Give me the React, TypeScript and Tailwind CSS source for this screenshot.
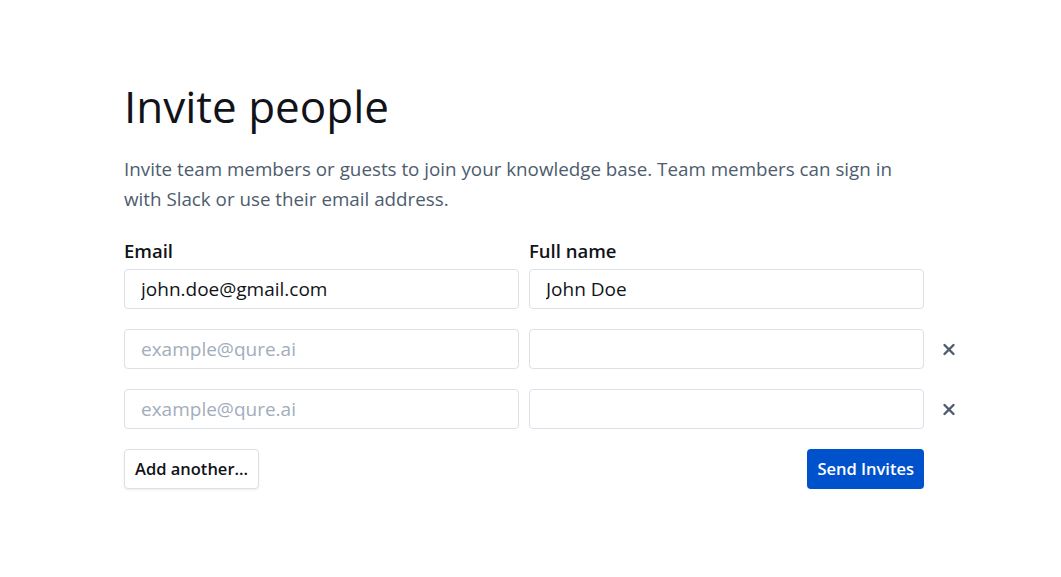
import { X } from "lucide-react";

const rows = [
  { email: "john.doe@gmail.com", name: "John Doe", removable: false },
  { email: "", name: "", removable: true },
  { email: "", name: "", removable: true },
];

export default function App() {
  return (
    <div className="min-h-screen bg-white font-['Open_Sans',sans-serif] text-[#111319]">
      <div className="pl-[124px] pt-[78px]">
        <h1 className="text-[44px] leading-[56px] font-normal">Invite people</h1>
        <p className="mt-[20px] w-[800px] text-[18.8px] leading-[30px] text-[#4e5c6e]">
          Invite team members or guests to join your knowledge base. Team members can sign in with Slack or use their email address.
        </p>

        <div className="mt-[24px] flex flex-col gap-[20px]">
          {rows.map((r, i) => (
            <div key={i} className="flex items-end">
              <div className="flex gap-[10px]">
                <div className="flex flex-col gap-[5px]">
                  {i === 0 && <label className="text-[18.5px] leading-[26px] font-semibold">Email</label>}
                  <input
                    defaultValue={r.email}
                    placeholder="example@qure.ai"
                    className="h-[40px] w-[395px] rounded-[4px] border border-[#dae1e9] px-[16px] text-[19px] text-[#111319] outline-none placeholder:text-[#a2adbb]"
                  />
                </div>
                <div className="flex flex-col gap-[5px]">
                  {i === 0 && <label className="text-[18.5px] leading-[26px] font-semibold">Full name</label>}
                  <input
                    defaultValue={r.name}
                    className="h-[40px] w-[395px] rounded-[4px] border border-[#dae1e9] px-[16px] text-[19px] text-[#111319] outline-none"
                  />
                </div>
              </div>
              {r.removable && (
                <button className="ml-[16px] flex h-[40px] w-[18px] items-center justify-center text-[#4e5c6e]">
                  <X size={19} strokeWidth={3.2} />
                </button>
              )}
            </div>
          ))}
        </div>

        <div className="mt-[20px] flex w-[800px] justify-between">
          <button className="h-[40px] rounded-[4px] border border-[#dae1e9] bg-white px-[10px] text-[16.5px] font-semibold text-[#111319] shadow-[0_1px_2px_rgba(0,0,0,0.08)]">
            Add another...
          </button>
          <button className="h-[40px] rounded-[4px] bg-[#0052cc] px-[10px] text-[16.5px] font-semibold text-white">
            Send Invites
          </button>
        </div>
      </div>
    </div>
  );
}
